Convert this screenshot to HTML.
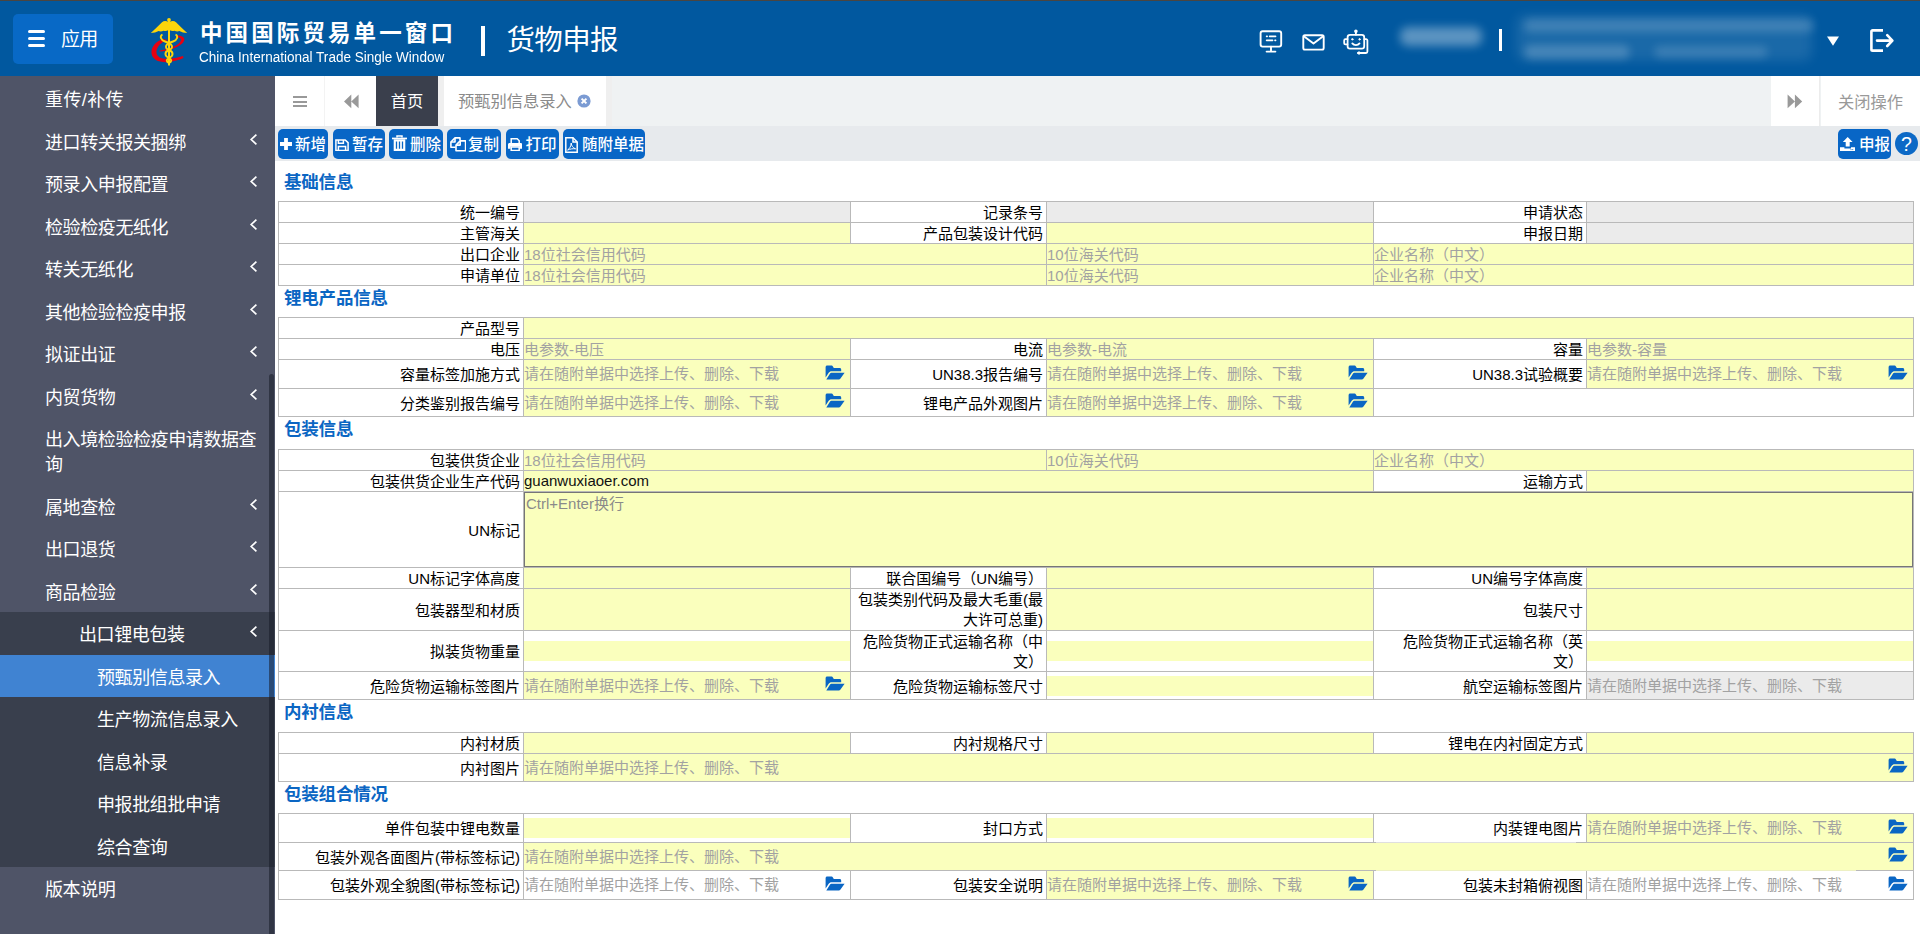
<!DOCTYPE html>
<html lang="zh-CN">
<head>
<meta charset="utf-8">
<title>货物申报 - 预甄别信息录入</title>
<style>
*{box-sizing:border-box;}
html,body{margin:0;padding:0;}
body{width:1920px;height:934px;overflow:hidden;background:#fff;position:relative;
  font-family:"Liberation Sans","Noto Sans CJK SC",sans-serif;color:#000;}
.abs{position:absolute;}
/* ---------- header ---------- */
#hd{position:absolute;left:0;top:0;width:1920px;height:76px;background:#01589f;border-top:1px solid #4a4541;}
#app{position:absolute;left:13px;top:13px;width:100px;height:50px;border-radius:5px;background:#0869c6;}
#app i{position:absolute;left:15px;width:17px;height:3.400px;background:#fff;border-radius:1.500px;}
#app span{position:absolute;left:48px;top:.5px;line-height:50px;font-size:19px;letter-spacing:-.8px;color:#fff;}
#t1{position:absolute;left:200px;top:15px;font-size:22.5px;font-weight:bold;letter-spacing:3.100px;color:#fff;line-height:35px;white-space:nowrap;}
#t2{position:absolute;left:199px;top:46px;font-size:15.5px;color:#fff;line-height:20px;white-space:nowrap;transform:scaleX(.873);transform-origin:0 0;}
#sep1{position:absolute;left:481px;top:25px;width:4px;height:30px;background:#fff;}
#t3{position:absolute;left:506.400px;top:18px;font-size:28.5px;letter-spacing:-.6px;color:#fff;line-height:42px;white-space:nowrap;}
.blur{position:absolute;background:rgba(255,255,255,.28);border-radius:8px;filter:blur(4px);}
/* ---------- sidebar ---------- */
#sb{position:absolute;left:0;top:76px;width:275px;height:858px;background:#4f5467;overflow:hidden;}
#sb .it{position:absolute;left:0;width:275px;height:42.5px;line-height:46.5px;color:#fff;font-size:18px;padding-left:45px;white-space:nowrap;letter-spacing:-0.4px;}
#sb .l2{padding-left:79px;}
#sb .l3{padding-left:97px;}
#sb .sub{position:absolute;left:0;width:275px;background:#393f4d;}
#sb .act{background:#4083d2;}
#sb svg.ch{position:absolute;left:249px;top:13px;width:9px;height:13px;}
#thumb{position:absolute;left:269px;top:298px;width:5.200px;height:580px;border-radius:3px 3px 0 0;background:rgba(24,27,40,.55);}
/* ---------- tabs ---------- */
#tabs{position:absolute;left:275px;top:76px;width:1645px;height:50px;background:#eff2f3;}
#tabs .c{position:absolute;top:0;height:50px;background:#fff;}
#tabs .tx{font-size:16.25px;line-height:50px;white-space:nowrap;text-align:center;}
/* ---------- toolbar ---------- */
#tb{position:absolute;left:275px;top:126px;width:1645px;height:35px;background:#e7eaed;}
.btn{position:absolute;top:3px;height:30px;border-radius:5px;background:#0866c6;color:#fff;font-size:15.5px;font-weight:500;line-height:32px;white-space:nowrap;}
.btn svg{position:absolute;}
.btn span{position:absolute;top:0;}

/* ---------- form ---------- */
.sh{position:absolute;left:284px;font-size:17.5px;font-weight:bold;color:#0b66c3;line-height:26px;white-space:nowrap;letter-spacing:-0.2px;}
table.ft{position:absolute;left:278px;width:1635px;border-collapse:collapse;table-layout:fixed;}
table.ft td{border:1px solid #b9b9b9;padding:0;font-size:15px;line-height:18px;vertical-align:middle;white-space:nowrap;overflow:hidden;position:relative;color:#a2a2a2;}
table.ft td.l{text-align:right;padding:2px 3px 0 0;background:#fff;color:#000;}
table.ft td.two{line-height:20px;padding-top:0 !important;}
table.ft td.y{background:#faffbd;}
table.ft td.g{background:#ebebeb;}
table.ft td.w{background:#fff;}
table.ft td.v{color:#111;}
table.ft .d1{position:relative;top:1px;}
table.ft tr.s td.y,table.ft tr.s td.g{padding-top:2px;}
table.ft tr.s td.v{padding-top:0;}
table.ft .in{height:20px;background:#faffbd;}
table.ft .ta{position:absolute;left:0;top:0;right:0;bottom:0;border:1px solid #767676;background:#faffbd;padding:1px 1px 0 1px;line-height:20px;color:#8a8a8a;}
svg.fo{position:absolute;right:5.300px;top:50%;margin-top:-9.500px;width:20px;height:15px;}
</style>
</head>
<body>
<!-- ================= HEADER ================= -->
<div id="hd">
  <div id="app"><i style="top:15.900px"></i><i style="top:22.700px"></i><i style="top:29.700px"></i><span>应用</span></div>
  <svg id="logo" class="abs" style="left:149.400px;top:16px" width="40" height="50" viewBox="0 0 40 50">
    <!-- red e swoosh -->
    <path d="M14 22 C7 24 2 30 2.5 36 C3 43 11 46 20 45 C26 44.3 31 42.6 34.5 41 L34 39 C28 41 20 42.5 14 41.5 C8 40.5 6.5 36 8 32 C9.5 27.5 14 24.5 19 23 Z" fill="#e60012"/>
    <path d="M10 34.5 C20 34 32 30 35 24 C36.5 20.5 33 18 27 18.5 L27 20.3 C31 20.3 33 21.8 31.6 24.3 C29 29 19 32.6 10.5 33.4 Z" fill="#e60012"/>
    <!-- wings -->
    <path d="M19.6 5.200C17.400 3.500 14.800 3.500 13 5.200C9.200 8.600 5.600 12.600 1.800 16C4.800 16 7.400 15.300 9.600 14.100C11.200 14.700 12.900 14.500 14.600 13.700C16.200 14.300 18 14 19.600 13Z" fill="#fcd50b"/>
    <path d="M20.400 5.200C22.600 3.500 25.200 3.500 27 5.200C30.800 8.600 34.400 12.600 38.200 16C35.200 16 32.600 15.300 30.400 14.100C28.800 14.700 27.100 14.500 25.400 13.700C23.800 14.300 22 14 20.400 13Z" fill="#fcd50b"/>
    <circle cx="20" cy="3" r="1.900" fill="#fcd50b"/>
    <!-- staff -->
    <rect x="19" y="2" width="2" height="46.5" fill="#fcd50b"/>
    <!-- snakes -->
    <g fill="none" stroke="#fcd50b" stroke-width="1.9">
      <path d="M13.5 17.5 C10.5 19 11.5 23 16 24.5 C24 27 25 31 20 33 C15 35 15.5 39 20 41 C23 42.3 23 45 20 46"/>
      <path d="M26.5 17.5 C29.5 19 28.5 23 24 24.5 C16 27 15 31 20 33 C25 35 24.5 39 20 41 C17 42.3 17 45 20 46"/>
    </g>
  </svg>
  <div id="t1">中国国际贸易单一窗口</div>
  <div id="t2">China International Trade Single Window</div>
  <div id="sep1"></div>
  <div id="t3">货物申报</div>
  <!-- right icons -->
  <svg class="abs" style="left:1258px;top:28px" width="26" height="26" viewBox="0 0 26 26" fill="none" stroke="#fff" stroke-width="1.9" stroke-linecap="round" stroke-linejoin="round">
    <rect x="2.6" y="2.2" width="20.6" height="15.4" rx="2"/><path d="M13 17.8v4.6M8.6 22.6h8.8"/><path d="M8.6 7.4h.6M11.6 7.4h6M8.6 11.4h6M17 11.4h.6" stroke-width="1.6"/>
  </svg>
  <svg class="abs" style="left:1300px;top:31px" width="28" height="22" viewBox="0 0 28 22" fill="none" stroke="#fff" stroke-width="1.9" stroke-linecap="round" stroke-linejoin="round">
    <rect x="3.3" y="3.2" width="20.4" height="14.4" rx="1.6"/><path d="M4.2 4.4L13.5 11.6L22.8 4.4"/>
  </svg>
  <svg class="abs" style="left:1341px;top:27px" width="30" height="28" viewBox="0 0 30 28" fill="none" stroke="#fff" stroke-width="1.800" stroke-linecap="round" stroke-linejoin="round">
    <rect x="6.600" y="6.900" width="16.600" height="13.700" rx="2.400"/><path d="M14.900 6.700V4.200"/><circle cx="14.900" cy="3.300" r=".9" fill="#fff"/>
    <path d="M6.400 11.200H4.400a1.200 1.200 0 0 0-1.200 1.200v2.800a1.200 1.200 0 0 0 1.200 1.200h2"/><path d="M23.400 11.200h1.800a1.200 1.200 0 0 1 1.200 1.200v11.200a1.400 1.400 0 0 1-1.400 1.400h-8"/>
    <path d="M11.300 15.400c1.700 2.200 5.500 2.200 7.200 0"/><circle cx="11.300" cy="11.300" r=".7" fill="#fff" stroke-width="1"/><circle cx="18.500" cy="11.300" r=".7" fill="#fff" stroke-width="1"/>
    <path d="M18.200 23.800l-1.400 1.200 1.400 1.200" stroke-width="1.200"/>
  </svg>
  <div class="blur" style="left:1400px;top:26px;width:82px;height:19px;background:rgba(255,255,255,.36);filter:blur(5px)"></div>
  <div class="abs" style="left:1499px;top:28px;width:3px;height:22px;background:#fff"></div>
  <div class="blur" style="left:1516px;top:14px;width:296px;height:46px;background:rgba(255,255,255,.10);filter:blur(6px)"></div>
  <div class="blur" style="left:1524px;top:18px;width:290px;height:13px;background:rgba(255,255,255,.17)"></div>
  <div class="blur" style="left:1524px;top:44px;width:106px;height:14px;background:rgba(255,255,255,.20)"></div>
  <div class="blur" style="left:1654px;top:45px;width:114px;height:12px;background:rgba(255,255,255,.15)"></div>
  <svg class="abs" style="left:1826px;top:34px" width="14" height="12" viewBox="0 0 14 12"><path d="M1 1.4h12L7 10.8z" fill="#fff"/></svg>
  <svg class="abs" style="left:1868px;top:27px" width="28" height="26" viewBox="0 0 28 26" fill="none" stroke="#fff" stroke-width="2.600" stroke-linejoin="round">
    <path d="M15 2.400H4.600a1.200 1.200 0 0 0-1.200 1.200v17.800a1.200 1.200 0 0 0 1.200 1.200H15"/><path d="M9 12.600h14.600M19.200 7.200l5.200 5.400-5.200 5.400" stroke-linecap="round"/>
  </svg>
</div>

<!-- ================= SIDEBAR ================= -->
<div id="sb">
  <div class="sub" style="top:536px;height:255px"></div>
  <div class="it" style="top:1px;letter-spacing:.4px">重传/补传</div>
  <div class="it" style="top:43.5px">进口转关报关捆绑<svg class="ch" viewBox="0 0 9 13"><path d="M7.4 1.6L2.2 6.5l5.2 4.9" fill="none" stroke="#fff" stroke-width="1.7"/></svg></div>
  <div class="it" style="top:86px">预录入申报配置<svg class="ch" viewBox="0 0 9 13"><path d="M7.4 1.6L2.2 6.5l5.2 4.9" fill="none" stroke="#fff" stroke-width="1.7"/></svg></div>
  <div class="it" style="top:128.5px">检验检疫无纸化<svg class="ch" viewBox="0 0 9 13"><path d="M7.4 1.6L2.2 6.5l5.2 4.9" fill="none" stroke="#fff" stroke-width="1.7"/></svg></div>
  <div class="it" style="top:171px">转关无纸化<svg class="ch" viewBox="0 0 9 13"><path d="M7.4 1.6L2.2 6.5l5.2 4.9" fill="none" stroke="#fff" stroke-width="1.7"/></svg></div>
  <div class="it" style="top:213.5px">其他检验检疫申报<svg class="ch" viewBox="0 0 9 13"><path d="M7.4 1.6L2.2 6.5l5.2 4.9" fill="none" stroke="#fff" stroke-width="1.7"/></svg></div>
  <div class="it" style="top:256px">拟证出证<svg class="ch" viewBox="0 0 9 13"><path d="M7.4 1.6L2.2 6.5l5.2 4.9" fill="none" stroke="#fff" stroke-width="1.7"/></svg></div>
  <div class="it" style="top:298.5px">内贸货物<svg class="ch" viewBox="0 0 9 13"><path d="M7.4 1.6L2.2 6.5l5.2 4.9" fill="none" stroke="#fff" stroke-width="1.7"/></svg></div>
  <div class="it" style="top:341px;height:67.5px;line-height:25px;padding-top:10.75px;white-space:normal;padding-right:14px">出入境检验检疫申请数据查询</div>
  <div class="it" style="top:408.5px">属地查检<svg class="ch" viewBox="0 0 9 13"><path d="M7.4 1.6L2.2 6.5l5.2 4.9" fill="none" stroke="#fff" stroke-width="1.7"/></svg></div>
  <div class="it" style="top:451px">出口退货<svg class="ch" viewBox="0 0 9 13"><path d="M7.4 1.6L2.2 6.5l5.2 4.9" fill="none" stroke="#fff" stroke-width="1.7"/></svg></div>
  <div class="it" style="top:493.5px">商品检验<svg class="ch" viewBox="0 0 9 13"><path d="M7.4 1.6L2.2 6.5l5.2 4.9" fill="none" stroke="#fff" stroke-width="1.7"/></svg></div>
  <div class="it l2" style="top:536px">出口锂电包装<svg class="ch" viewBox="0 0 9 13"><path d="M7.4 1.6L2.2 6.5l5.2 4.9" fill="none" stroke="#fff" stroke-width="1.7"/></svg></div>
  <div class="it l3 act" style="top:578.5px">预甄别信息录入</div>
  <div class="it l3" style="top:621px">生产物流信息录入</div>
  <div class="it l3" style="top:663.5px">信息补录</div>
  <div class="it l3" style="top:706px">申报批组批申请</div>
  <div class="it l3" style="top:748.5px">综合查询</div>
  <div class="it" style="top:791px">版本说明</div>
  <div id="thumb"></div>
</div>

<!-- ================= TAB BAR ================= -->
<div id="tabs">
  <div class="c" style="left:0;width:50px;border-right:1px solid #f3f3f3">
    <i class="abs" style="left:18px;top:20px;width:14px;height:2px;background:#999"></i>
    <i class="abs" style="left:18px;top:24.5px;width:14px;height:2px;background:#999"></i>
    <i class="abs" style="left:18px;top:29px;width:14px;height:2px;background:#999"></i>
  </div>
  <div class="c" style="left:50px;width:51px">
    <svg class="abs" style="left:18px;top:18px" width="16" height="15" viewBox="0 0 16 15"><path d="M8.300.600v13.600L1 7.400zM15.600.600v13.600L8.300 7.400z" fill="#999"/></svg>
  </div>
  <div class="c tx" style="left:101px;width:62px;background:#3a3f4c;color:#fff">首页</div>
  <div class="c" style="left:163px;width:6px;background:#efefef"></div>
  <div class="c" style="left:331px;width:6px;background:#efefef"></div>
  <div class="c tx" style="left:169px;width:162px;color:#8a8a8a;text-align:left;padding-left:14px">预甄别信息录入
    <svg class="abs" style="left:132.5px;top:18px" width="14" height="14" viewBox="0 0 14 14"><circle cx="7" cy="7" r="6.6" fill="#7b9bd3"/><path d="M4.6 4.6l4.8 4.8M9.4 4.6l-4.8 4.8" stroke="#fff" stroke-width="2"/></svg>
  </div>
  <div class="c" style="left:1496px;width:49px;border-right:1px solid #ececec">
    <svg class="abs" style="left:16px;top:18px" width="16" height="15" viewBox="0 0 16 15"><path d="M.6.600v13.600l7.300-6.800zM7.900.600v13.600l7.300-6.800z" fill="#999"/></svg>
  </div>
  <div class="c tx" style="left:1546px;width:99px;color:#999;line-height:52px">关闭操作</div>
</div>

<!-- ================= TOOLBAR ================= -->
<div id="tb">
  <div class="btn" style="left:3px;width:50px"><svg style="left:2px;top:9.4px" width="12" height="12" viewBox="0 0 12 12"><path d="M4.100 0h3.800v4.100H12v3.800H7.900V12H4.100V7.900H0V4.100h4.100z" fill="#fff"/></svg><span style="left:17px">新增</span></div>
  <div class="btn" style="left:58px;width:52px"><svg style="left:2px;top:9.600px" width="14" height="12.400" viewBox="0 0 14 12.400" fill="none" stroke="#fff" stroke-width="1.500"><path d="M.9.900h9.300l2.900 2.700v8H.9z"/><path d="M3.400 1v3.200h5V1"/><path d="M3.400 11.400V7.400h7.200v4"/></svg><span style="left:19px">暂存</span></div>
  <div class="btn" style="left:114px;width:54px"><svg style="left:3px;top:6px" width="15" height="16" viewBox="0 0 15 16"><path d="M0 2.600h15v1.700H0z" fill="#fff"/><path d="M5 2.600V1h5v1.600" fill="none" stroke="#fff" stroke-width="1.500"/><path d="M1.700 4.300h11.600V16H1.700z" fill="#fff"/><path d="M4.500 6.400v7.400M7.500 6.400v7.400M10.500 6.400v7.400" stroke="#0866c6" stroke-width="1.300"/></svg><span style="left:21px">删除</span></div>
  <div class="btn" style="left:172px;width:54px"><svg style="left:2.500px;top:8.200px" width="16.500" height="14.600" viewBox="0 0 16.500 14.600" fill="none" stroke="#fff" stroke-width="1.600" stroke-linejoin="round"><path d="M10 3.400V.9H5L.9 5v5.300h4.700"/><path d="M5 .9V5H.9"/><path d="M10.200 3.900h5.400v9.800H6V8.100z"/><path d="M10.200 3.900v4.200H6"/></svg><span style="left:21px">复制</span></div>
  <div class="btn" style="left:231px;width:53px"><svg style="left:2px;top:8.600px" width="14.400" height="13.200" viewBox="0 0 14.400 13.200"><path d="M3.200.8h6l2 1.900v3.100h-8z" fill="none" stroke="#fff" stroke-width="1.500"/><path d="M0 6.500C0 5.600.7 5 1.500 5h11.400c.8 0 1.500.6 1.500 1.500v4.300h-2.600V8.600H2.600v2.200H0z" fill="#fff"/><path d="M3.200 9h8v3.400h-8z" fill="none" stroke="#fff" stroke-width="1.500"/></svg><span style="left:19.500px">打印</span></div>
  <div class="btn" style="left:288px;width:82px"><svg style="left:2.400px;top:7.600px" width="13" height="16" viewBox="0 0 13 16" fill="none" stroke="#fff" stroke-width="1.500"><path d="M.8.800h7.200l4.200 4.200v10.200H.8z"/><path d="M8 .800v4.200h4.200"/><path d="M2.600 13c2-1.200 3.400-3.800 3.600-7 .2 3 1.800 5 4.400 5.800-2.800-.3-5.600.2-8 1.200z" stroke-width="1"/></svg><span style="left:19px">随附单据</span></div>
  <div class="btn" style="left:1563px;width:53px"><svg style="left:2px;top:8px" width="15.400" height="14.200" viewBox="0 0 15.400 14.200"><path d="M7.700 0l4.900 5H9.700v4.400h-4V5H2.800z" fill="#fff"/><path d="M0 10.200h4.400v1.300h6.600v-1.300h4.400v4H0z" fill="#fff"/><path d="M10.600 12.600h.9M12.300 12.600h.9" stroke="#0866c6" stroke-width=".9"/></svg><span style="left:21px">申报</span></div>
  <div class="abs" style="left:1620px;top:6px;width:23px;height:23px;border-radius:50%;background:#0c69c6;color:#fff;font-size:19.500px;line-height:24px;text-align:center;">?</div>
</div>

<!-- ================= FORM ================= -->
<div id="fm">
<div class="sh" style="top:169px">基础信息</div>
<table class="ft" style="top:201px"><colgroup><col style="width:245px"><col style="width:327px"><col style="width:196px"><col style="width:327px"><col style="width:213px"><col style="width:327px"></colgroup>
<tr class="s" style="height:21px"><td class="l">统一编号</td><td class="g"></td><td class="l">记录条号</td><td class="g"></td><td class="l">申请状态</td><td class="g"></td></tr>
<tr class="s" style="height:21px"><td class="l">主管海关</td><td class="y"></td><td class="l">产品包装设计代码</td><td class="y"></td><td class="l">申报日期</td><td class="g"></td></tr>
<tr class="s" style="height:21px"><td class="l">出口企业</td><td class="y" colspan="2">18位社会信用代码</td><td class="y">10位海关代码</td><td class="y" colspan="2">企业名称（中文）</td></tr>
<tr class="s" style="height:21px"><td class="l">申请单位</td><td class="y" colspan="2">18位社会信用代码</td><td class="y">10位海关代码</td><td class="y" colspan="2">企业名称（中文）</td></tr>
</table>
<div class="sh" style="top:284.5px">锂电产品信息</div>
<table class="ft" style="top:317px"><colgroup><col style="width:245px"><col style="width:327px"><col style="width:196px"><col style="width:327px"><col style="width:213px"><col style="width:327px"></colgroup>
<tr class="s" style="height:21px"><td class="l">产品型号</td><td class="y" colspan="5"></td></tr>
<tr class="s" style="height:21px"><td class="l">电压</td><td class="y">电参数-电压</td><td class="l">电流</td><td class="y">电参数-电流</td><td class="l">容量</td><td class="y">电参数-容量</td></tr>
<tr style="height:29px"><td class="l">容量标签加施方式</td><td class="y">请在随附单据中选择上传、删除、下载<svg class="fo" viewBox="0 0 20 15"><path d="M.6 2.2C.6 1.2 1.3.6 2.2.6h4.400c.6 0 1 .3 1.300.8l.9 1.700h5.800c1 0 1.600.6 1.600 1.600v1.500H6.600c-1.300 0-2.200.5-2.900 1.600L.6 12.600z" fill="#0a66c4"/><path d="M1.300 14.400l3.600-5.600c.5-.8 1.100-1.100 2-1.100h12.700l-4.300 6c-.4.500-.8.700-1.400.700z" fill="#0a66c4"/></svg></td><td class="l">UN38.3报告编号</td><td class="y">请在随附单据中选择上传、删除、下载<svg class="fo" viewBox="0 0 20 15"><path d="M.6 2.2C.6 1.2 1.3.6 2.2.6h4.400c.6 0 1 .3 1.300.8l.9 1.700h5.800c1 0 1.600.6 1.600 1.600v1.500H6.600c-1.300 0-2.200.5-2.900 1.600L.6 12.600z" fill="#0a66c4"/><path d="M1.300 14.400l3.600-5.600c.5-.8 1.100-1.100 2-1.100h12.700l-4.300 6c-.4.500-.8.700-1.400.700z" fill="#0a66c4"/></svg></td><td class="l">UN38.3试验概要</td><td class="y">请在随附单据中选择上传、删除、下载<svg class="fo" viewBox="0 0 20 15"><path d="M.6 2.2C.6 1.2 1.3.6 2.2.6h4.400c.6 0 1 .3 1.300.8l.9 1.700h5.800c1 0 1.600.6 1.600 1.600v1.500H6.600c-1.300 0-2.200.5-2.900 1.600L.6 12.600z" fill="#0a66c4"/><path d="M1.300 14.400l3.600-5.600c.5-.8 1.100-1.100 2-1.100h12.700l-4.300 6c-.4.500-.8.700-1.400.700z" fill="#0a66c4"/></svg></td></tr>
<tr style="height:28px"><td class="l">分类鉴别报告编号</td><td class="y">请在随附单据中选择上传、删除、下载<svg class="fo" viewBox="0 0 20 15"><path d="M.6 2.2C.6 1.2 1.3.6 2.2.6h4.400c.6 0 1 .3 1.300.8l.9 1.700h5.800c1 0 1.600.6 1.600 1.600v1.500H6.600c-1.300 0-2.200.5-2.900 1.600L.6 12.600z" fill="#0a66c4"/><path d="M1.300 14.400l3.600-5.600c.5-.8 1.100-1.100 2-1.100h12.700l-4.300 6c-.4.500-.8.700-1.400.700z" fill="#0a66c4"/></svg></td><td class="l">锂电产品外观图片</td><td class="y">请在随附单据中选择上传、删除、下载<svg class="fo" viewBox="0 0 20 15"><path d="M.6 2.2C.6 1.2 1.3.6 2.2.6h4.400c.6 0 1 .3 1.300.8l.9 1.700h5.800c1 0 1.600.6 1.600 1.600v1.500H6.600c-1.300 0-2.200.5-2.900 1.600L.6 12.600z" fill="#0a66c4"/><path d="M1.300 14.400l3.600-5.600c.5-.8 1.100-1.100 2-1.100h12.700l-4.300 6c-.4.500-.8.700-1.400.700z" fill="#0a66c4"/></svg></td><td class="w" colspan="2"></td></tr>
</table>
<div class="sh" style="top:415.5px">包装信息</div>
<table class="ft" style="top:449px"><colgroup><col style="width:245px"><col style="width:327px"><col style="width:196px"><col style="width:327px"><col style="width:213px"><col style="width:327px"></colgroup>
<tr class="s" style="height:21px"><td class="l">包装供货企业</td><td class="y" colspan="2">18位社会信用代码</td><td class="y">10位海关代码</td><td class="y" colspan="2">企业名称（中文）</td></tr>
<tr class="s" style="height:21px"><td class="l">包装供货企业生产代码</td><td class="y v" colspan="3">guanwuxiaoer.com</td><td class="l">运输方式</td><td class="y"></td></tr>
<tr style="height:76px"><td class="l">UN标记</td><td class="w" colspan="5"><div class="ta">Ctrl+Enter换行</div></td></tr>
<tr class="s" style="height:21px"><td class="l">UN标记字体高度</td><td class="y"></td><td class="l">联合国编号（UN编号）</td><td class="y"></td><td class="l">UN编号字体高度</td><td class="y"></td></tr>
<tr style="height:42px"><td class="l">包装器型和材质</td><td class="y"></td><td class="l two">包装类别代码及最大毛重(最<br>大许可总重)</td><td class="y"></td><td class="l">包装尺寸</td><td class="y"></td></tr>
<tr style="height:41px"><td class="l">拟装货物重量</td><td class="w"><div class="in"></div></td><td class="l two"><span class="d1">危险货物正式运输名称（中<br>文）</span></td><td class="w"><div class="in"></div></td><td class="l two"><span class="d1">危险货物正式运输名称（英<br>文）</span></td><td class="w"><div class="in"></div></td></tr>
<tr style="height:28px"><td class="l">危险货物运输标签图片</td><td class="y">请在随附单据中选择上传、删除、下载<svg class="fo" viewBox="0 0 20 15"><path d="M.6 2.2C.6 1.2 1.3.6 2.2.6h4.400c.6 0 1 .3 1.300.8l.9 1.700h5.800c1 0 1.600.6 1.600 1.600v1.500H6.600c-1.300 0-2.200.5-2.900 1.600L.6 12.600z" fill="#0a66c4"/><path d="M1.300 14.400l3.600-5.600c.5-.8 1.100-1.100 2-1.100h12.700l-4.300 6c-.4.500-.8.700-1.400.700z" fill="#0a66c4"/></svg></td><td class="l">危险货物运输标签尺寸</td><td class="w"><div class="in"></div></td><td class="l">航空运输标签图片</td><td class="g">请在随附单据中选择上传、删除、下载</td></tr>
</table>
<div class="sh" style="top:698.5px">内衬信息</div>
<table class="ft" style="top:732px"><colgroup><col style="width:245px"><col style="width:327px"><col style="width:196px"><col style="width:327px"><col style="width:213px"><col style="width:327px"></colgroup>
<tr class="s" style="height:21px"><td class="l">内衬材质</td><td class="y"></td><td class="l">内衬规格尺寸</td><td class="y"></td><td class="l">锂电在内衬固定方式</td><td class="y"></td></tr>
<tr style="height:28px"><td class="l">内衬图片</td><td class="y" colspan="5">请在随附单据中选择上传、删除、下载<svg class="fo" viewBox="0 0 20 15"><path d="M.6 2.2C.6 1.2 1.3.6 2.2.6h4.400c.6 0 1 .3 1.300.8l.9 1.700h5.800c1 0 1.600.6 1.600 1.600v1.500H6.600c-1.300 0-2.200.5-2.900 1.600L.6 12.600z" fill="#0a66c4"/><path d="M1.300 14.400l3.600-5.600c.5-.8 1.100-1.100 2-1.100h12.700l-4.300 6c-.4.500-.8.700-1.400.700z" fill="#0a66c4"/></svg></td></tr>
</table>
<div class="sh" style="top:780.5px">包装组合情况</div>
<table class="ft" style="top:813px"><colgroup><col style="width:245px"><col style="width:327px"><col style="width:196px"><col style="width:327px"><col style="width:213px"><col style="width:327px"></colgroup>
<tr style="height:29px"><td class="l">单件包装中锂电数量</td><td class="w"><div class="in"></div></td><td class="l">封口方式</td><td class="w"><div class="in"></div></td><td class="l">内装锂电图片</td><td class="y">请在随附单据中选择上传、删除、下载<svg class="fo" viewBox="0 0 20 15"><path d="M.6 2.2C.6 1.2 1.3.6 2.2.6h4.400c.6 0 1 .3 1.300.8l.9 1.700h5.800c1 0 1.600.6 1.600 1.600v1.500H6.600c-1.300 0-2.200.5-2.900 1.600L.6 12.600z" fill="#0a66c4"/><path d="M1.300 14.400l3.600-5.600c.5-.8 1.100-1.100 2-1.100h12.700l-4.300 6c-.4.500-.8.700-1.400.700z" fill="#0a66c4"/></svg></td></tr>
<tr style="height:28px"><td class="l">包装外观各面图片(带标签标记)</td><td class="y" colspan="5">请在随附单据中选择上传、删除、下载<svg class="fo" viewBox="0 0 20 15"><path d="M.6 2.2C.6 1.2 1.3.6 2.2.6h4.400c.6 0 1 .3 1.300.8l.9 1.700h5.800c1 0 1.600.6 1.600 1.600v1.500H6.600c-1.300 0-2.200.5-2.900 1.600L.6 12.600z" fill="#0a66c4"/><path d="M1.300 14.400l3.600-5.600c.5-.8 1.100-1.100 2-1.100h12.700l-4.300 6c-.4.500-.8.700-1.400.700z" fill="#0a66c4"/></svg></td></tr>
<tr style="height:29px"><td class="l">包装外观全貌图(带标签标记)</td><td class="w">请在随附单据中选择上传、删除、下载<svg class="fo" viewBox="0 0 20 15"><path d="M.6 2.2C.6 1.2 1.3.6 2.2.6h4.400c.6 0 1 .3 1.300.8l.9 1.700h5.800c1 0 1.600.6 1.600 1.600v1.500H6.600c-1.300 0-2.200.5-2.900 1.600L.6 12.600z" fill="#0a66c4"/><path d="M1.300 14.400l3.600-5.600c.5-.8 1.100-1.100 2-1.100h12.700l-4.300 6c-.4.500-.8.700-1.400.700z" fill="#0a66c4"/></svg></td><td class="l">包装安全说明</td><td class="y">请在随附单据中选择上传、删除、下载<svg class="fo" viewBox="0 0 20 15"><path d="M.6 2.2C.6 1.2 1.3.6 2.2.6h4.400c.6 0 1 .3 1.300.8l.9 1.700h5.800c1 0 1.600.6 1.600 1.600v1.500H6.600c-1.300 0-2.200.5-2.900 1.600L.6 12.600z" fill="#0a66c4"/><path d="M1.300 14.400l3.600-5.600c.5-.8 1.100-1.100 2-1.100h12.700l-4.300 6c-.4.500-.8.700-1.400.700z" fill="#0a66c4"/></svg></td><td class="l">包装未封箱俯视图</td><td class="w">请在随附单据中选择上传、删除、下载<svg class="fo" viewBox="0 0 20 15"><path d="M.6 2.2C.6 1.2 1.3.6 2.2.6h4.400c.6 0 1 .3 1.300.8l.9 1.700h5.800c1 0 1.600.6 1.600 1.600v1.500H6.600c-1.300 0-2.200.5-2.900 1.600L.6 12.600z" fill="#0a66c4"/><path d="M1.300 14.400l3.600-5.600c.5-.8 1.100-1.100 2-1.100h12.700l-4.300 6c-.4.500-.8.700-1.400.700z" fill="#0a66c4"/></svg></td></tr>
</table>
<div class="abs" style="left:1376px;top:870px;width:480px;height:1px;background:#f6f9c6;opacity:.85"></div>
<div class="abs" style="left:1376px;top:842px;width:200px;height:1px;background:#fff;opacity:.55"></div>
</div><!--/fm-->
</body>
</html>
